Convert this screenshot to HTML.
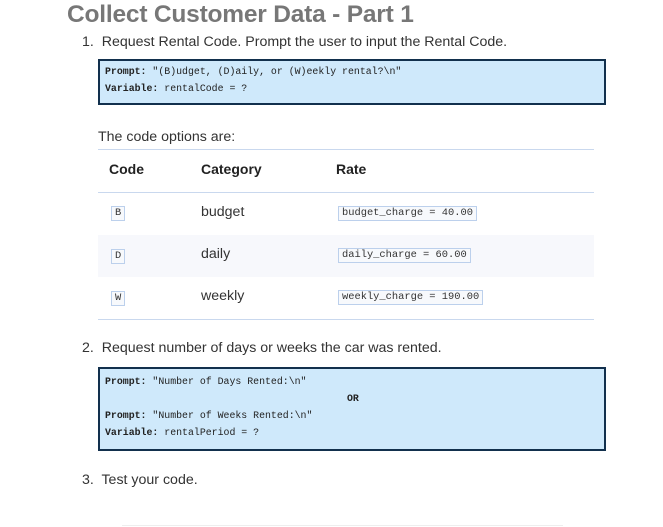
<!DOCTYPE html>
<html><head><style>
body{margin:0;width:663px;height:527px;background:#fff;position:relative;overflow:hidden;font-family:"Liberation Sans",sans-serif;color:#333}
.a{position:absolute;white-space:nowrap}
h1{position:absolute;left:67px;top:1px;margin:0;font-size:24.5px;font-weight:bold;color:#777;letter-spacing:-0.2px}
.t{font-size:14.2px;color:#333}
.box{position:absolute;left:98px;width:504px;background:#cfe9fb;border:2px solid #12304d;font-family:"Liberation Mono",monospace;font-size:9.9px;color:#222}
.box div{position:absolute;left:5px;white-space:pre}
.box b{font-weight:bold}
.line{position:absolute;left:98px;width:496px;height:1px;background:#c9d8ee}
.hd{font-size:14px;font-weight:bold;color:#222}
.code{position:absolute;font-family:"Liberation Mono",monospace;font-size:10.4px;border:1px solid #bcd0ec;background:#f7f9fc;padding:0 3px;line-height:13px;color:#333}
</style></head><body>
<h1>Collect Customer Data - Part 1</h1>
<div class="a t" style="left:82px;top:34px">1.&nbsp; Request Rental Code. Prompt the user to input the Rental Code.</div>
<div class="box" style="top:59px;height:42px">
<div style="top:5px"><b>Prompt:</b> "(B)udget, (D)aily, or (W)eekly rental?\n"</div>
<div style="top:22px"><b>Variable:</b> rentalCode = ?</div>
</div>
<div class="a t" style="left:98px;top:129px">The code options are:</div>
<div class="line" style="top:149px"></div>
<div class="a hd" style="left:109px;top:161px">Code</div>
<div class="a hd" style="left:201px;top:161px">Category</div>
<div class="a hd" style="left:336px;top:161px">Rate</div>
<div class="line" style="top:192px"></div>
<div style="position:absolute;left:98px;top:235px;width:496px;height:42px;background:#f7f8fc"></div>
<div class="code" style="left:111px;top:206px">B</div>
<div class="a t" style="left:201px;top:204px">budget</div>
<div class="code" style="left:338px;top:206px">budget_charge = 40.00</div>
<div class="code" style="left:111px;top:249px">D</div>
<div class="a t" style="left:201px;top:246px">daily</div>
<div class="code" style="left:338px;top:248px">daily_charge = 60.00</div>
<div class="code" style="left:111px;top:291px">W</div>
<div class="a t" style="left:201px;top:288px">weekly</div>
<div class="code" style="left:338px;top:290px">weekly_charge = 190.00</div>
<div class="line" style="top:319px"></div>
<div class="a t" style="left:82px;top:340px">2.&nbsp; Request number of days or weeks the car was rented.</div>
<div class="box" style="top:367px;height:80px">
<div style="top:7px"><b>Prompt:</b> "Number of Days Rented:\n"</div>
<div style="top:24px;left:247px"><b>OR</b></div>
<div style="top:41px"><b>Prompt:</b> "Number of Weeks Rented:\n"</div>
<div style="top:58px"><b>Variable:</b> rentalPeriod = ?</div>
</div>
<div class="a t" style="left:82px;top:472px">3.&nbsp; Test your code.</div>
<div style="position:absolute;left:122px;top:525px;width:441px;height:1px;background:#eee"></div>
</body></html>
